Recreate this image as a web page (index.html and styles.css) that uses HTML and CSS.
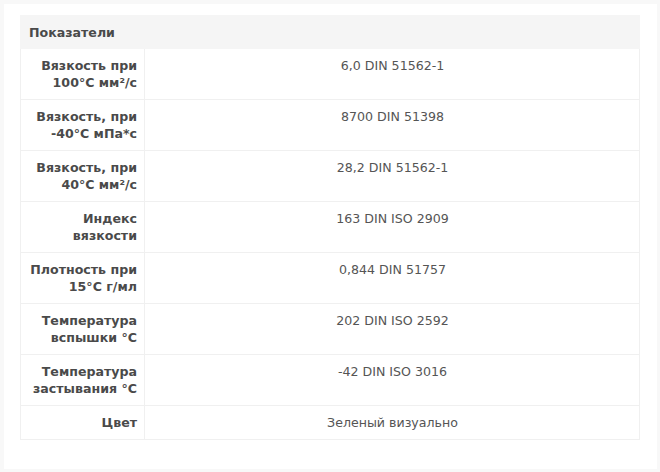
FILE: index.html
```html
<!DOCTYPE html>
<html lang="ru">
<head>
<meta charset="utf-8">
<link rel="stylesheet" href="styles.css">
</head>
<body>
<div class="panel">
  <table class="specs">
    <thead>
      <tr><th colspan="2" class="head">Показатели</th></tr>
    </thead>
    <tbody>
      <tr><th>Вязкость при 100°C мм²/с</th><td>6,0 DIN 51562-1</td></tr>
      <tr><th>Вязкость, при -40°C мПа*с</th><td>8700 DIN 51398</td></tr>
      <tr><th>Вязкость, при 40°C мм²/с</th><td>28,2 DIN 51562-1</td></tr>
      <tr><th>Индекс вязкости</th><td>163 DIN ISO 2909</td></tr>
      <tr><th>Плотность при 15°C г/мл</th><td>0,844 DIN 51757</td></tr>
      <tr><th>Температура вспышки °C</th><td>202 DIN ISO 2592</td></tr>
      <tr><th>Температура застывания °C</th><td>-42 DIN ISO 3016</td></tr>
      <tr><th>Цвет</th><td>Зеленый визуально</td></tr>
    </tbody>
  </table>
</div>
</body>
</html>
```
FILE: styles.css
```css
html, body {
  margin: 0;
  padding: 0;
}
body {
  background: #f8f8f8;
  padding: 4px 3px 3px 4px;
  font-family: "DejaVu Sans", Verdana, sans-serif;
  font-size: 12.6px;
  color: #555;
}
.panel {
  background: #fff;
  height: 465px;
  padding: 11px 17px 0 16px;
  box-sizing: border-box;
}
.specs {
  width: 620px;
  border-collapse: collapse;
  border: 1px solid #f0f0f0;
}
.specs th, .specs td {
  border: 1px solid #f0f0f0;
  padding: 8px 7px 8px 8px;
  line-height: 17px;
  vertical-align: top;
}
.specs th {
  width: 108px;
  text-align: right;
  font-weight: bold;
  color: #4a4a4a;
}
.specs th.head {
  text-align: left;
  background: #f5f5f5;
  border-color: #f5f5f5;
  width: auto;
  padding-bottom: 7px;
}
.specs td {
  text-align: center;
}
```
